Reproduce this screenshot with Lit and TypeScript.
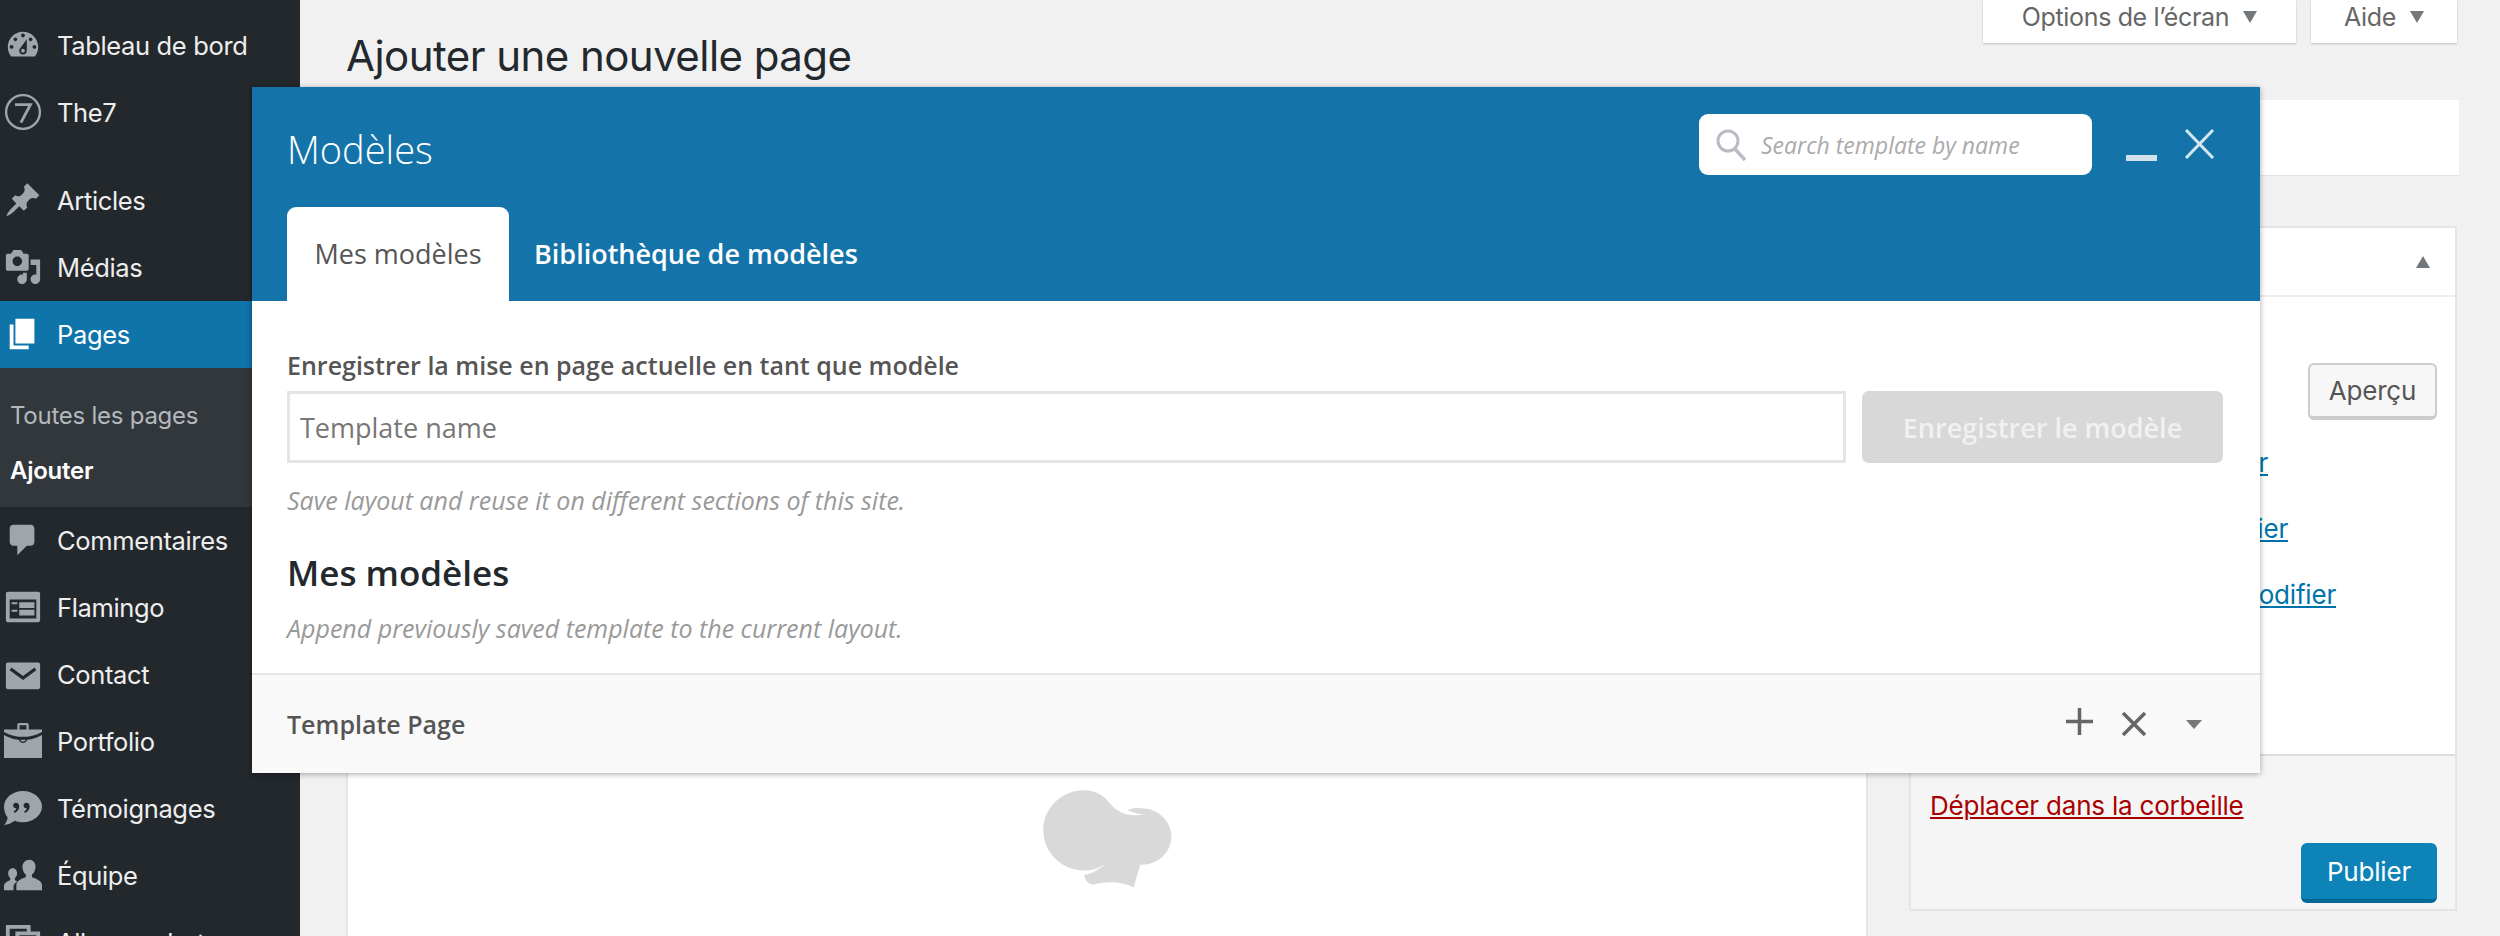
import { LitElement, html, css, svg } from "lit";
import { customElement } from "lit/decorators.js";

const ICONS: Record<string, any> = {
  dash: svg`<path fill-rule="evenodd" d="M3.76 16h12.48c1.1-1.37 1.76-3.11 1.76-5 0-4.42-3.58-8-8-8s-8 3.58-8 8c0 1.89.66 3.63 1.76 5zM10 4c.55 0 1 .45 1 1s-.45 1-1 1-1-.45-1-1 .45-1 1-1zM6 6c.55 0 1 .45 1 1s-.45 1-1 1-1-.45-1-1 .45-1 1-1zm8 0c.55 0 1 .45 1 1s-.45 1-1 1-1-.45-1-1 .45-1 1-1zm-5.37 5.55L12 7v6c0 1.1-.9 2-2 2s-2-.9-2-2c0-.57.24-1.08.63-1.45zM4 10c.55 0 1 .45 1 1s-.45 1-1 1-1-.45-1-1 .45-1 1-1zm12 0c.55 0 1 .45 1 1s-.45 1-1 1-1-.45-1-1 .45-1 1-1zm-5 3c0-.55-.45-1-1-1s-1 .45-1 1 .45 1 1 1 1-.45 1-1z"/>`,
  seven: svg`<circle cx="10" cy="10" r="8.9" fill="none" stroke="currentColor" stroke-width="1.25"/><path fill="none" stroke="currentColor" stroke-width="1.5" d="M5.8 6.1h8.1L8.9 15.6"/>`,
  pin: svg`<path d="M10.44 3.02l1.82-1.82 6.36 6.35-1.83 1.82c-1.05-.68-2.48-.57-3.41.36l-.75.75c-.92.93-1.04 2.35-.35 3.41l-1.83 1.82-2.41-2.41-2.8 2.79c-.42.42-3.38 2.71-3.8 2.29s1.86-3.39 2.28-3.81l2.79-2.79L4.1 9.36l1.83-1.82c1.05.69 2.48.57 3.4-.36l.75-.75c.93-.92 1.05-2.35.36-3.41z"/>`,
  media: svg`<path fill-rule="evenodd" d="M13 11V4c0-.55-.45-1-1-1h-1.67L9 1H5L3.67 3H2c-.55 0-1 .45-1 1v7c0 .55.45 1 1 1h10c.55 0 1-.45 1-1zM7 4.5c1.38 0 2.5 1.12 2.5 2.5S8.38 9.5 7 9.5 4.5 8.38 4.5 7 5.62 4.5 7 4.5zM14 6h5v10.5c0 1.38-1.12 2.5-2.5 2.5S14 17.88 14 16.5s1.12-2.5 2.5-2.5c.17 0 .34.02.5.05V9h-3V6zm-4 8.05V13h2v3.5c0 1.38-1.12 2.5-2.5 2.5S7 17.88 7 16.5 8.12 14 9.5 14c.17 0 .34.02.5.05z"/>`,
  page: svg`<path d="M6 15V2h10v13H6zm-1 1h8v2H3V5h2v11z"/>`,
  comment: svg`<path d="M5 2h9c1.1 0 2 .9 2 2v7c0 1.1-.9 2-2 2h-2l-5 5v-5H5c-1.1 0-2-.9-2-2V4c0-1.1.9-2 2-2z"/>`,
  feedback: svg`<path fill-rule="evenodd" d="M2 2h16c.55 0 1 .45 1 1v14c0 .55-.45 1-1 1H2c-.55 0-1-.45-1-1V3c0-.55.45-1 1-1zm15 4H3v10h14V6zM4 7.5v1h3v-1H4zm4 0v3h8v-3H8zm-4 4v1h3v-1H4zm4 0v3h8v-3H8z"/>`,
  mail: svg`<path fill-rule="evenodd" d="M2 4h16c.55 0 1 .45 1 1v12c0 .55-.45 1-1 1H2c-.55 0-1-.45-1-1V5c0-.55.45-1 1-1zm1.9 2.6L3 8l7 5.2L17 8l-.9-1.4L10 11z"/>`,
  case: svg`<path fill-rule="evenodd" d="M7 1.5c0-.6.5-1 1-1h4c.5 0 1 .4 1 1V4h-1.2V1.7H8.2V4H7zM0 4h20v1.2C17 7 13 7.8 10 7.8S3 7 0 5.2zM0 6.8c2.5 1.4 5 2.2 7.8 2.5.3 1 1.2 1.7 2.2 1.7s1.9-.7 2.2-1.7c2.8-.3 5.3-1.1 7.8-2.5V19H0zM8.6 9.3h2.8c-.2.6-.8 1-1.4 1s-1.2-.4-1.4-1z"/>`,
  quote: svg`<path fill-rule="evenodd" d="M10 1c5.5 0 10 3.7 10 8.2s-4.500 8.300-10 8.300c-1.500 0-3-.3-4.300-.8C4 17.900 2 18.800 0 19c1-1 1.800-2.500 1.900-4C.700 13.500 0 11.400 0 9.200 0 4.700 4.500 1 10 1zM6.300 7.200c-.9 0-1.500.7-1.500 1.500 0 .8.600 1.400 1.400 1.400.1 0 .2 0 .3 0-.1.7-.6 1.300-1.400 1.600l.4.900c1.700-.6 2.500-1.900 2.500-3.500 0-1.100-.7-1.900-1.700-1.900zm5.500 0c-.9 0-1.500.7-1.500 1.500 0 .8.600 1.400 1.400 1.400.1 0 .2 0 .3 0-.1.7-.6 1.300-1.400 1.600l.4.900c1.700-.6 2.500-1.900 2.500-3.500 0-1.100-.7-1.900-1.700-1.900z"/>`,
  team: svg`<path d="M13.300 2c2 0 3.300 1.700 3.300 3.700 0 1.700-.8 3.300-1.900 4.100v1.300c.6.500 5.300 1.500 5.300 4.200V18H6.500v-2.700c0-2.700 4.200-3.700 5-4.200V9.800C10.400 9 9.700 7.400 9.700 5.700 9.700 3.700 11.300 2 13.300 2zM4.600 6.500c1.300 0 2.300 1.100 2.300 2.600 0 1.100-.5 2-1.200 2.600v.9c.3.200.9.500 1.400.7-1.200.7-2.100 1.800-2.100 3V18H0v-2.300c0-1.900 2.700-2.600 3.300-3.100v-.9C2.600 11 2.200 10.100 2.200 9.100c0-1.500 1.100-2.600 2.400-2.600z"/>`,
  album: svg`<path fill-rule="evenodd" d="M1 1h13v3.500h5V19H6v-5H1zm2 2v9h3V4.500h6V3zm5 3.500V17h9V6.500z"/>`,
};

const icon = (n: string) => html`<svg class="ic ic-${n}" viewBox="0 0 20 20" fill="currentColor">${ICONS[n]}</svg>`;

@customElement("app-root")
export class AppRoot extends LitElement {
  static styles = css`
    :host { display: block; position: relative; width: 100%; height: 936px; overflow: hidden; background: #f1f1f1; font-family: Inter, "Liberation Sans", sans-serif; color: #444; }
    * { box-sizing: border-box; }
    .page { display: flex; height: 936px; }

    .side { width: 300px; flex: none; background: #23282d; padding-top: 11.500px; color: #eee; }
    .item { display: flex; align-items: center; height: 67px; font-size: 25.500px; letter-spacing: -0.35px; white-space: nowrap; }
    .item .ico { width: 57px; flex: none; display: flex; justify-content: center; padding-right: 12px; color: #a0a5aa; }
    .ic { display: block; width: 38px; height: 38px; }
    .sep { height: 21px; }
    .item.cur { background: #0e74a9; color: #fff; }
    .item.cur .ico { color: #fff; }
    .sub { background: #32373c; height: 139px; padding: 20px 0 0 10px; font-size: 24px; letter-spacing: -0.25px; color: #b4b9be; }
    .sub div { height: 55px; display: flex; align-items: center; }
    .sub .on { color: #fff; font-weight: 600; }

    .main { flex: 1; min-width: 0; padding: 0 43px 0 46px; display: flex; flex-direction: column; }
    .top { display: flex; justify-content: space-between; height: 100px; flex: none; }
    h1 { margin: 0; padding-top: 28px; font-size: 42px; line-height: 56px; font-weight: 400; color: #23282d; letter-spacing: -0.55px; }
    .tabs { display: flex; gap: 15px; }
    .stab { height: 43px; background: #fff; display: flex; align-items: center; justify-content: center; gap: 14px; padding-bottom: 9px; box-shadow: 0 1px 2px rgba(0,0,0,.2); font-size: 25px; letter-spacing: -0.35px; color: #666; }
    .s1 { width: 313px; }
    .s2 { width: 146px; }
    .down { width: 0; height: 0; border: 7.500px solid transparent; border-top: 12px solid #72777c; border-bottom: 0; }
    .titlebox { flex: none; height: 75px; margin-right: -2px; background: #fff; box-shadow: 0 1px 1px rgba(0,0,0,.06); }
    .cols { display: flex; gap: 41px; margin-top: 51px; align-items: flex-start; }
    .editor { flex: 1; min-width: 0; height: 800px; background: #fff; border: 2px solid #e5e5e5; padding-top: 562px; display: flex; justify-content: center; align-items: flex-start; }
    .hat { width: 129px; height: 98px; display: block; }
    .pub { width: 548px; flex: none; background: #fff; border: 2px solid #e5e5e5; }
    .pub-h { height: 69px; border-bottom: 2px solid #eee; display: flex; align-items: center; justify-content: flex-end; padding: 0 25px 0 0; }
    .up { width: 0; height: 0; border: 7.500px solid transparent; border-bottom: 12px solid #72777c; border-top: 0; }
    .pub-b { padding: 66px 18px 127px 18px; font-size: 26px; letter-spacing: -0.2px; }
    .prev { margin-left: auto; width: 129px; height: 57px; display: flex; align-items: center; justify-content: center; background: #f7f7f7; border: 2px solid #ccc; border-bottom-width: 4px; border-radius: 6px; color: #555; }
    .misc { height: 66px; display: flex; justify-content: flex-end; align-items: center; gap: 10px; white-space: nowrap; }
    .misc:first-of-type { margin-top: 9px; }
    .m1 { padding-right: 169px; margin-top: 9px; }
    .m2 { padding-right: 149px; }
    .m3 { padding-right: 101px; }
    a { color: #0073aa; text-decoration: underline; }
    .pub-f { height: 155px; background: #f5f5f5; border-top: 2px solid #ddd; padding: 30px 18px 0 19px; font-size: 26px; letter-spacing: -0.2px; position: relative; }
    .pub-f a { color: #a00; display: block; line-height: 40px; }
    .publish { margin: 17px 0 0 auto; width: 136px; height: 60px; background: #0d83b8; border-bottom: 4px solid #006799; border-radius: 6px; color: #fff; display: flex; align-items: center; justify-content: center; }

    .modal { position: absolute; left: 252px; top: 87px; width: 2008px; height: 686px; background: #fff; box-shadow: 0 1px 6px rgba(0,0,0,.35); font-family: "Open Sans", sans-serif; display: flex; flex-direction: column; }
    .m-h { height: 214px; flex: none; background: #1474a9; padding: 0 45px 0 35px; display: flex; flex-direction: column; justify-content: space-between; }
    .m-top { display: flex; align-items: flex-start; }
    .m-title { flex: 1; margin: 34px 0 0 0; font-size: 38px; line-height: 56px; font-weight: 300; color: #fff; }
    .search { width: 393px; height: 61px; margin-top: 27px; background: #fff; border-radius: 9px; display: flex; align-items: center; gap: 14px; padding: 0 0 0 17px; font-size: 23px; font-style: italic; color: #aaa; }
    .search svg { width: 31px; height: 32px; flex: none; }
    .min { width: 31px; height: 6px; margin: 68px 0 0 34px; background: #d0e1ec; }
    .cl { width: 31px; height: 30px; margin: 42px 0 0 27px; display: block; }
    .m-tabs { display: flex; align-items: flex-end; height: 94px; font-size: 27px; font-weight: 600; color: #fff; }
    .mt { height: 94px; display: flex; align-items: center; padding-bottom: 2px; }
    .mt.act { width: 222px; justify-content: center; background: #fff; border-radius: 9px 9px 0 0; color: #555; font-weight: 400; }
    .mt.oth { margin-left: 25px; }
    .m-b { flex: 1; padding: 46px 37px 0 35px; color: #555; }
    .lab { font-size: 25px; line-height: 36px; font-weight: 600; }
    .form { display: flex; gap: 16px; margin-top: 8px; }
    input { flex: 1; min-width: 0; height: 72px; border: 3px solid #e5e5e5; padding: 0 10px; font: 400 27px "Open Sans", sans-serif; color: #555; background: #fff; outline: none; }
    input::placeholder { color: #777; opacity: 1; }
    .save { width: 361px; flex: none; height: 72px; background: #d8d8d8; border-radius: 7px; display: flex; align-items: center; justify-content: center; color: #f1f1f1; font-size: 27px; font-weight: 600; }
    .hint { font-size: 25px; line-height: 36px; font-style: italic; color: #999; }
    .h1 { margin-top: 19px; }
    h2 { margin: 32px 0 0; font-size: 35px; line-height: 46px; font-weight: 600; color: #23282d; }
    .h2 { margin-top: 14px; }
    .row { height: 100px; flex: none; background: #f9f9f9; border-top: 2px solid #e5e5e5; padding: 0 0 0 35px; display: flex; align-items: center; font-size: 25px; font-weight: 600; color: #555; }
    .row span { flex: 1; }
    .row svg { display: block; flex: none; }
    .r1 { width: 29px; height: 29px; margin: -6px 0 0 0; }
    .r2 { width: 26px; height: 26px; margin: 0 0 0 27px; }
    .r3 { width: 16px; height: 9px; margin: 0 58px 0 39px; }
  </style>
  `;

  render() {
    const top1 = [["dash", "Tableau de bord"], ["seven", "The7"]];
    const top2 = [["pin", "Articles"], ["media", "Médias"]];
    const bot = [["comment", "Commentaires"], ["feedback", "Flamingo"], ["mail", "Contact"], ["case", "Portfolio"], ["quote", "Témoignages"], ["team", "Équipe"], ["album", "Albums photos"]];
    const it = (x: string[]) => html`<div class="item"><span class="ico">${icon(x[0])}</span>${x[1]}</div>`;
    return html`
      <div class="page">
        <nav class="side">
          ${top1.map(it)}
          <div class="sep"></div>
          ${top2.map(it)}
          <div class="item cur"><span class="ico">${icon("page")}</span>Pages</div>
          <div class="sub"><div>Toutes les pages</div><div class="on">Ajouter</div></div>
          ${bot.map(it)}
        </nav>
        <main class="main">
          <div class="top">
            <h1>Ajouter une nouvelle page</h1>
            <div class="tabs">
              <div class="stab s1">Options de l’écran <i class="down"></i></div>
              <div class="stab s2">Aide <i class="down"></i></div>
            </div>
          </div>
          <div class="titlebox"></div>
          <div class="cols">
            <div class="editor">
              <svg class="hat" viewBox="425 330 388 296" fill="#d9d9d9"><path d="M548 331C585 331 608 348 628 372C648 395 668 405 700 406C710 406 720 405 727 403C712 403 695 398 680 391C693 385 705 384 722 385C772 385 812 425 812 470C812 518 772 556 722 556L718 556L698 624C660 606 620 605 575 616C560 614 550 600 548 587C570 582 595 570 612 554C590 568 570 573 548 573C480 573 425 518 425 451C425 385 480 331 548 331Z"/></svg>
            </div>
            <aside class="pub">
              <div class="pub-h"><i class="up"></i></div>
              <div class="pub-b">
                <div class="prev">Aperçu</div>
                <div class="misc m1">État : Brouillon <a>Modifier</a></div>
                <div class="misc m2">Visibilité : Public <a>Modifier</a></div>
                <div class="misc m3">Publier tout de suite <a>Modifier</a></div>
              </div>
              <div class="pub-f">
                <a>Déplacer dans la corbeille</a>
                <div class="publish">Publier</div>
              </div>
            </aside>
          </div>
        </main>
      </div>

      <section class="modal">
        <header class="m-h">
          <div class="m-top">
            <div class="m-title">Modèles</div>
            <div class="search">
              <svg viewBox="0 0 31 32" fill="none" stroke="#b9bcc4" stroke-width="3"><circle cx="12" cy="12" r="10"/><path d="M19 20l10 11" stroke-width="3.500"/></svg>
              Search template by name
            </div>
            <div class="min"></div>
            <svg class="cl" viewBox="0 0 31 30" fill="none" stroke="#d6e5ee" stroke-width="3"><path d="M2 1l27 28M29 1L2 29"/></svg>
          </div>
          <div class="m-tabs">
            <div class="mt act">Mes modèles</div>
            <div class="mt oth">Bibliothèque de modèles</div>
          </div>
        </header>
        <div class="m-b">
          <div class="lab">Enregistrer la mise en page actuelle en tant que modèle</div>
          <div class="form">
            <input placeholder="Template name" />
            <div class="save">Enregistrer le modèle</div>
          </div>
          <div class="hint h1">Save layout and reuse it on different sections of this site.</div>
          <h2>Mes modèles</h2>
          <div class="hint h2">Append previously saved template to the current layout.</div>
        </div>
        <div class="row">
          <span>Template Page</span>
          <svg class="r1" viewBox="0 0 29 29" stroke="#666" stroke-width="3.500" fill="none"><path d="M14.500 1v27M1 14.500h27"/></svg>
          <svg class="r2" viewBox="0 0 26 26" stroke="#666" stroke-width="3.500" fill="none"><path d="M2 2l22 22M24 2L2 24"/></svg>
          <svg class="r3" viewBox="0 0 16 9" fill="#777"><path d="M0 0h16L8 9z"/></svg>
        </div>
      </section>
    `;
  }
}
